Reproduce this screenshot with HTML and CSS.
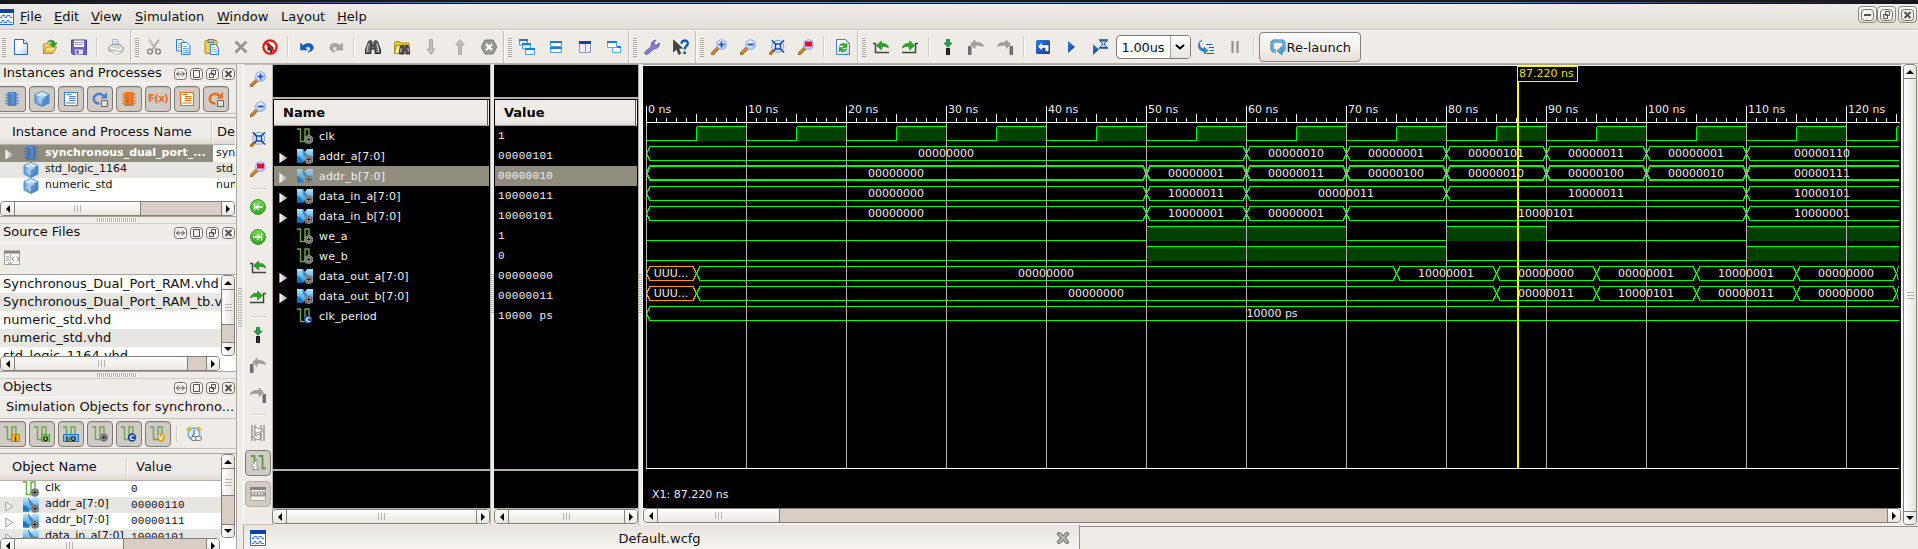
FILE: index.html
```html
<!DOCTYPE html>
<html lang="en">
<head>
<meta charset="utf-8">
<title>Default.wcfg</title>
<link rel="stylesheet" href="styles.css">
</head>
<body>
<svg class="defs" width="0" height="0" aria-hidden="true">
<defs>
<linearGradient id="gGlass" x1="0" y1="0" x2="1" y2="1"><stop offset="0" stop-color="#ffffff"/><stop offset="1" stop-color="#a5c6f2"/></linearGradient>
<linearGradient id="gPaper" x1="0" y1="0" x2="1" y2="1"><stop offset=".4" stop-color="#ffffff"/><stop offset="1" stop-color="#b4cdf5"/></linearGradient>
<linearGradient id="gFold" x1="0" y1="0" x2="0" y2="1"><stop offset="0" stop-color="#fff6a0"/><stop offset="1" stop-color="#ddb62c"/></linearGradient>
<linearGradient id="gBlue" x1="0" y1="0" x2="1" y2="1"><stop offset="0" stop-color="#2a7fe0"/><stop offset="1" stop-color="#16378c"/></linearGradient>
<linearGradient id="gBus" x1="0" y1="0" x2="0" y2="1"><stop offset="0" stop-color="#b5e6fb"/><stop offset="1" stop-color="#1f8fdc"/></linearGradient>
<linearGradient id="gGreen" x1="0" y1="0" x2="0" y2="1"><stop offset="0" stop-color="#7bdc4c"/><stop offset="1" stop-color="#2ca81f"/></linearGradient>
<linearGradient id="gTri" x1="0" y1="0" x2="1" y2="0"><stop offset="0" stop-color="#ffffff"/><stop offset="1" stop-color="#9b9b9b"/></linearGradient>
<symbol id="new" viewBox="0 0 16 16"><path d="M1.5.5h9l4 4v11h-13z" fill="url(#gPaper)" stroke="#2f62b8"/><path d="M10.500.500v4h4" fill="#dbe8fb" stroke="#2f62b8"/></symbol>
<symbol id="open" viewBox="0 0 16 16"><path d="M1.500 14.500V5.500l2-1h3l1 1.500h5v3" fill="#f3d958" stroke="#b08f1c"/><path d="M1.500 14.500l3-6.500h10l-3.500 6.500z" fill="url(#gFold)" stroke="#b08f1c"/><path d="M5.500 3C8 .3 12 .5 13 4.200l2-.3-3.200 4.300L8.300 5l2-.3C9.500 2.800 8 2.500 5.500 3z" fill="#27a81f" stroke="#127a14" stroke-width=".6"/></symbol>
<symbol id="save" viewBox="0 0 16 16"><path d="M.5 1h15v14.500H2L.5 14z" fill="#6a63c2" stroke="#4a4497"/><path d="M3 1.500h10V8H3z" fill="#fff"/><path d="M4 3.500h8M4 5.500h8" stroke="#9b96d5"/><path d="M4 10.500h8v5H4z" fill="#dcdbe6"/><path d="M5.500 11.500h2v3h-2z" fill="#4a4497"/></symbol>
<symbol id="print" viewBox="0 0 16 16"><path d="M4.500 6V.500h5l1.500 5.500" fill="#eef4fd" stroke="#9fb4d6"/><path d="M6 2.500h3M6 4.500h4" stroke="#9fb4d6" stroke-width=".8"/><path d="M.8 8l3-2.500h8l3.500 2.500v3.500l-4 3L.8 11.800z" fill="#d5d5d9" stroke="#8f8f96" stroke-width=".8"/><path d="M1 8.300l10 2.700 4-2.800" fill="none" stroke="#fff"/><path d="M2 12l7 3.500 4.500-2-3-1.500z" fill="#fff" stroke="#9a9aa0" stroke-width=".6"/></symbol>
<symbol id="cut" viewBox="0 0 16 16"><path d="M3 .500L10 10.500M13 .500L6 10.500" stroke="#a5a29d" stroke-width="1.600"/><path d="M3.500 1.500L9 9.500" stroke="#e2dfdb" stroke-width=".6"/><circle cx="4" cy="12.500" r="2.400" fill="none" stroke="#85827d" stroke-width="1.400"/><circle cx="12" cy="12.500" r="2.400" fill="none" stroke="#85827d" stroke-width="1.400"/></symbol>
<symbol id="copy" viewBox="0 0 16 16"><path d="M1.500.500h5.500l3 3v8.500H1.500z" fill="#e4f0fd" stroke="#3b83cf"/><path d="M3 4.500h4M3 6.500h3M3 8.500h3" stroke="#86b5e6"/><path d="M6.500 3.500H12l3 3v9H6.500z" fill="url(#gPaper)" stroke="#3b83cf"/><path d="M8 7.500h4M8 9.500h5.500M8 11.500h5.500M8 13.500h5.500" stroke="#6ba4e0"/></symbol>
<symbol id="paste" viewBox="0 0 16 16"><rect x="1" y="1.500" width="12" height="13" rx="1" fill="#edd04e" stroke="#a88a24"/><path d="M4 .500h6v3H4z" fill="#b9b9b9" stroke="#777"/><path d="M6.500 5.500h5l3 3v7h-8z" fill="url(#gPaper)" stroke="#3b83cf"/><path d="M8 8.500h3M8 10.500h5M8 12.500h5" stroke="#86b5e6"/></symbol>
<symbol id="del" viewBox="0 0 16 16"><path d="M2.500 2.500l11 11M13.500 2.500l-11 11" stroke="#989590" stroke-width="2.800"/></symbol>
<symbol id="noptr" viewBox="0 0 16 16"><path d="M5.500 3l7 6.500-3.200.300 1.500 3.600-2 .8-1.600-3.500L5.500 12z" fill="#333"/><circle cx="8" cy="8" r="6.600" fill="none" stroke="#ee1111" stroke-width="2.100"/><path d="M3.300 3.300l9.400 9.400" stroke="#ee1111" stroke-width="1.900"/></symbol>
<symbol id="undo" viewBox="0 0 16 16"><path d="M1.500 4v7h7L6.300 8.700c2-1.700 5-1.200 5 .8 0 1.500-.9 2.600-2.300 3.500 3.500-.3 5.800-2.400 5.300-5.200C13.300 4 8 3.300 4 6.500z" fill="#0f62c0" stroke="#0a4b9b" stroke-width=".5"/></symbol>
<symbol id="redo" viewBox="0 0 16 16"><path d="M14.500 4v7h-7L9.700 8.700c-2-1.700-5-1.200-5 .8 0 1.500.9 2.600 2.300 3.500C3.800 12.700 1.500 10.600 2 7.800 2.700 4 8 3.300 12 6.500z" fill="#aaa7a3" stroke="#88857f" stroke-width=".6"/></symbol>
<symbol id="binoc" viewBox="0 0 16 16"><path d="M3.500 2.500l2-1 1.500 1v4h2v-4l1.500-1 2 1 3 8.500v3.500h-5.500V10h-4v4.500H.500V11z" fill="#6d6d6d" stroke="#222"/><path d="M3.500 4.500L2 11v2M12 4.500l1.500 6.500v2" fill="none" stroke="#d7d7d7"/><path d="M6 4v7M10 4v7" stroke="#333"/></symbol>
<symbol id="findf" viewBox="0 0 16 16"><path d="M.500 14.500v-11l1-1h4l1 1.500H15v2" fill="#e5c43c" stroke="#b08f1c"/><path d="M.500 14.500L2.500 6.500h13v8z" fill="#f9ea83" stroke="#b08f1c"/><path d="M6.500 7l2-1 1 1v2h1.500V7l1-1 2 1 1.500 5v3h-3.500v-3h-2v3H5.500v-3z" fill="#555" stroke="#222" stroke-width=".8"/><path d="M7 9l-.5 4M14 9l.5 4" stroke="#ddd" stroke-width=".8"/></symbol>
<symbol id="down" viewBox="0 0 16 16"><path d="M6.500.500h3V10h2.500L8 15.500 4 10h2.500z" fill="#c2bfba" stroke="#9e9b96" stroke-width=".8"/></symbol>
<symbol id="up" viewBox="0 0 16 16"><path d="M6.500 15.500h3V6h2.500L8 .500 4 6h2.500z" fill="#c2bfba" stroke="#9e9b96" stroke-width=".8"/></symbol>
<symbol id="stop" viewBox="0 0 16 16"><path d="M4 1h8l4 7-4 7H4L0 8z" fill="#9b9994" stroke="#7a7773"/><path d="M5 5l6 6M11 5l-6 6" stroke="#fff" stroke-width="2.200"/></symbol>
<symbol id="cascade" viewBox="0 0 16 16"><g fill="#eaf4fd" stroke="#4aa0e4"><path d="M.500.500h8v5.500h-8zM3.500 4.500h8V10h-8zM6.500 9.500h9v6h-9z"/></g><path d="M0 1h9M3 5h9M6 10h10" stroke="#1f7bd2" stroke-width="2"/></symbol>
<symbol id="tileh" viewBox="0 0 16 16"><path d="M2.500 2.500h11v5h-11zM2.500 8.500h11v5h-11z" fill="#fff" stroke="#4aa0e4"/><path d="M2 3h12M2 9h12" stroke="#1f7bd2" stroke-width="2"/></symbol>
<symbol id="tilev" viewBox="0 0 16 16"><path d="M2.500 2.500h11v11h-11z" fill="#eef0f2" stroke="#8b9db5"/><path d="M8.500 5v8.500" stroke="#8b9db5"/><path d="M2 3.500h12" stroke="#0b449f" stroke-width="3"/></symbol>
<symbol id="layers" viewBox="0 0 16 16"><path d="M6.500 7.500h8v6h-8z" fill="#fff" stroke="#55aee8"/><path d="M1.500 2.500h9v6h-9z" fill="#fff" stroke="#55aee8"/><path d="M1 3h10M11 8h4" stroke="#1f7bd2" stroke-width="2"/></symbol>
<symbol id="wrench" viewBox="0 0 16 16"><path d="M2 15.300C.6 15 .4 13.700 1.300 12.800L7.300 7.500C6.600 4.500 8.400 1.500 12 1L10 3.600l.3 2.200 2.200.4L15.300 4c.5 3.500-2 6-5.300 5.700l-6 5.200z" fill="#8580cd" stroke="#4c4799" stroke-width=".8"/></symbol>
<symbol id="whats" viewBox="0 0 16 16"><path d="M.5 1v12l3-3 2.300 5.500 2-1L5.600 9.300h4z" fill="#444" stroke="#222" stroke-width=".6"/><path d="M8.500 4.700c0-4.200 6.300-4.200 6.300-.2 0 3-3.200 2.500-3.200 6" fill="none" stroke="#0b55bd" stroke-width="2.300"/><path d="M10.300 12.500h2.600V15h-2.600z" fill="#0b55bd"/></symbol>
<symbol id="lens" viewBox="0 0 16 16"><path d="M1.500 14.500L7 9" stroke="#9c5b13" stroke-width="3.200" stroke-linecap="round"/><path d="M1.500 14.200L6.500 9.200" stroke="#e09635" stroke-width="1.600" stroke-linecap="round"/><circle cx="10.500" cy="5.500" r="4.800" fill="url(#gGlass)" stroke="#8ea9e4" stroke-width="1.100"/></symbol>
<symbol id="zin" viewBox="0 0 16 16"><use href="#lens"/><path d="M7.500 5.500h6M10.500 2.500v6" stroke="#1b4fae" stroke-width="1.700"/></symbol>
<symbol id="zout" viewBox="0 0 16 16"><use href="#lens"/><path d="M7.500 5.500h6" stroke="#1b4fae" stroke-width="1.700"/></symbol>
<symbol id="zsel" viewBox="0 0 16 16"><use href="#lens"/><path d="M7 2.500h7v5H7z" fill="#f0022c"/></symbol>
<symbol id="zfit" viewBox="0 0 16 16"><path d="M1.500 14.500l3-3" stroke="#c2701a" stroke-width="3.200" stroke-linecap="round"/><circle cx="8.800" cy="7.300" r="6" fill="#dce8fb" stroke="#7e9bde"/><path d="M2.800 1.300L15 13.500M15 1.300L4 12.300" stroke="#164a9e" stroke-width="1.600"/><path d="M6.500 5h5v5h-5z" fill="#dce8fb" stroke="#164a9e" stroke-width="1.400"/></symbol>
<symbol id="refresh" viewBox="0 0 16 16"><path d="M1.500.500h9l4 4v11h-13z" fill="url(#gPaper)" stroke="#3b83cf"/><path d="M4.500 7.500c0-3 4-4.500 6-2.300L12 4v4.500H7.500l1.500-1.500C8 6 6 6 4.500 7.500zM11.500 9.500c0 3-4 4.500-6 2.300L4 13V8.500h4.500L7 10c1 1 3 1 4.500-.5z" fill="#2fae2b" stroke="#128016" stroke-width=".4"/></symbol>
<symbol id="garrow" viewBox="0 0 16 16"><path d="M3.500 6.500L8.500 2v2.500c4-.5 6.500 1 7 4.500-1.800-1.500-4-1.800-7-1.500V11z" fill="#27a81f" stroke="#127a14" stroke-width=".6"/></symbol>
<symbol id="prevt" viewBox="0 0 16 16"><path d="M0 4.500h2.500v9H16" fill="none" stroke="#444" stroke-width="1.500"/><use href="#garrow"/></symbol>
<symbol id="nextt" viewBox="0 0 16 16"><path d="M0 13.500h13.500v-9H16" fill="none" stroke="#444" stroke-width="1.500"/><use href="#garrow" transform="translate(16 0) scale(-1 1)"/></symbol>
<symbol id="marker" viewBox="0 0 16 16"><path d="M6.500.500h3V4h2.500L8 8.300 4 4h2.500z" fill="#28a245" stroke="#0f6b28" stroke-width=".7"/><path d="M6.500 9.500h3v6h-3z" fill="#333" stroke="#111"/></symbol>
<symbol id="pmark" viewBox="0 0 16 16"><path d="M.500 7.500h2.500v8H.500z" fill="#777" stroke="#666"/><path d="M2.500 5.500L7 1v2.500c4-.5 8 .5 8.500 4C13 6.500 10 6 7 6.500v3z" fill="#a19f9a" stroke="#85827d" stroke-width=".5"/></symbol>
<symbol id="nmark" viewBox="0 0 16 16"><path d="M13 7.500h2.500v8H13z" fill="#777" stroke="#666"/><path d="M13.500 5.500L9 1v2.500c-4-.5-8 .5-8.500 4C3 6.500 6 6 9 6.500v3z" fill="#a19f9a" stroke="#85827d" stroke-width=".5"/></symbol>
<symbol id="restart" viewBox="0 0 16 16"><rect x="1" y="1" width="14" height="14" rx="1.500" fill="url(#gBlue)"/><path d="M3 7.500L7 3.800v2.400h6.500v6H10.500V8.800H7v2.400z" fill="#fff"/></symbol>
<symbol id="run" viewBox="0 0 16 16"><path d="M5 2l7 6-7 6z" fill="url(#gBlue)"/></symbol>
<symbol id="runfor" viewBox="0 0 16 16"><path d="M1 5l6 5.500L1 16z" fill="url(#gBlue)"/><path d="M7 1h9M7 9h9" stroke="#134f9e" stroke-width="1.600"/><path d="M8 2h7l-3 3 3 3.500H8L11 5z" fill="#cfe0f8" stroke="#134f9e"/></symbol>
<symbol id="step" viewBox="0 0 16 16"><path d="M4 1C0 3 1 9 6 10V8l4 3.500L6 15v-2.500C-1.500 11.500-1 3 4 1z" fill="#2b84cc" stroke="#1660a8" stroke-width=".5"/><path d="M8 5.500h6M11 8.500h5M12 11.500h4M8 14.500h8" stroke="#1660a8" stroke-width="1.200"/></symbol>
<symbol id="pause" viewBox="0 0 16 16"><path d="M5.500 2v12M10.500 2v12" stroke="#96938e" stroke-width="2.200"/></symbol>
<symbol id="relaunch" viewBox="0 0 16 16"><path d="M6 12H3.500l-1.500-1.500V3.500L3.500 2h9L14 3.500v7L12.500 12H11" fill="none" stroke="#1f74bd" stroke-width="3"/><path d="M6 12H3.500l-1.500-1.500V3.500L3.500 2h9L14 3.500v7L12.500 12H11" fill="none" stroke="#70c0f2" stroke-width="1.400"/><path d="M7 12l5-4.500v8.500z" fill="#4da7e4" stroke="#1f74bd" stroke-width=".7"/></symbol>
<symbol id="chip" viewBox="0 0 16 16"><path d="M1 3.500h14M1 6.500h14M1 9.500h14M1 12.500h14" stroke="currentColor" stroke-width="1.300" opacity=".7"/><rect x="3.500" y="1" width="9" height="14" rx="1" fill="currentColor"/><path d="M5 2.500h4v11" stroke="#fff" opacity=".3" fill="none"/></symbol>
<symbol id="cube" viewBox="0 0 16 16"><path d="M8 .500l7 3v8.500l-7 3.500-7-3.500V3.500z" fill="#78aede" stroke="#3670ae" stroke-width=".8"/><path d="M8 .800l6.500 2.900L8 7 1.500 3.700z" fill="#d3e8fa"/><path d="M8 7v8.300l6.500-3.200V3.800z" fill="#4a87c6"/><path d="M4 6.500l4-2.500 4 2.500v4L8 13l-4-2.500z" fill="#a8d0f3" opacity=".75"/><path d="M8 8.500l4-2v4L8 13z" fill="#3670ae" opacity=".6"/></symbol>
<symbol id="doc" viewBox="0 0 16 16"><path d="M1.500 1.500h13v13h-13z" fill="#fff" stroke="currentColor" stroke-width="1.200"/><path d="M3.500 3.500h5M6 5.500h6.500M6 7.500h6.500M6 9.500h6.500M3.500 12h9" stroke="currentColor" stroke-width="1.100"/></symbol>
<symbol id="proc" viewBox="0 0 16 16"><path d="M7.500 12.500C1 12.500 0 5.500 5 3.300c2.500-1 5-.3 6.500 1.700" fill="none" stroke="currentColor" stroke-width="2.500"/><path d="M8.500 7.500H15V1z" fill="currentColor"/><path d="M9.500 9.500h6v6h-6z" fill="#e0dedb" stroke="#666"/></symbol>
<symbol id="src" viewBox="0 0 16 16"><path d="M.500 1.500h15v13h-15z" fill="#f8f7f5" stroke="#a19e99"/><path d="M0 2h16" stroke="#888580" stroke-width="3"/><path d="M6.500 4v6.500M2 6.500h3M2 8.500h3M2 10.500h3" stroke="#aaa"/><path d="M10 6.500L8 9l2 2.500M13 6.500L15 9l-2 2.500M4 13h4" stroke="#888" fill="none"/></symbol>
<symbol id="sig" viewBox="0 0 16 16"><path d="M0 1h3.500v12.500H8V1h4v7" fill="none" stroke="#6fa550" stroke-width="1.400"/></symbol>
<symbol id="knob" viewBox="0 0 16 16"><circle cx="11.800" cy="11.500" r="4" fill="#606060" stroke="#9d9d9d"/><circle cx="11.800" cy="11.500" r="2.200" fill="#c4c4c4"/><path d="M10 11.500h3.600M11.800 9.700v3.600" stroke="#111" stroke-width="1.200"/></symbol>
<symbol id="sigk" viewBox="0 0 16 16"><use href="#sig"/><use href="#knob"/></symbol>
<symbol id="bus" viewBox="0 0 16 16"><path d="M0 1h6l2 3 2-3h6v13.500H10L8 12l-2 2.500H0z" fill="url(#gBus)"/><path d="M0 8l3 1 4 5.500H0z" fill="#1676c4"/><path d="M5 1h1l5 7-1.500 2.500L6 6z" fill="#1a5f9c" opacity=".6"/><use href="#knob"/></symbol>
<symbol id="sigc" viewBox="0 0 16 16"><use href="#sig"/><circle cx="11" cy="11.500" r="4.200" fill="#24489a"/><text x="11" y="14" class="badge badge-light">C</text></symbol>
<symbol id="sigv" viewBox="0 0 16 16"><use href="#sig"/><circle cx="11" cy="11.500" r="4.200" fill="#dda02e"/><text x="11" y="14" class="badge badge-light">V</text></symbol>
<symbol id="sigi" viewBox="0 0 16 16"><use href="#sig"/><path d="M7.500 8.500h8v7h-8z" fill="#efb82c" stroke="#b58210"/><text x="11.500" y="14.600" class="badge">I</text></symbol>
<symbol id="sigo" viewBox="0 0 16 16"><use href="#sig"/><path d="M7.500 8.500h8v7h-8z" fill="#8bd06a" stroke="#4c9a30"/><text x="11.500" y="14.600" class="badge">O</text></symbol>
<symbol id="sigio" viewBox="0 0 16 16"><use href="#sig"/><path d="M.500 8.500h15v7H.500z" fill="#74bdf0" stroke="#1f6fb5"/><text x="8" y="14.600" class="badge">I/O</text></symbol>
<symbol id="alarm" viewBox="0 0 16 16"><circle cx="8" cy="8" r="5.800" fill="#e3f1fd" stroke="#6aaee6" stroke-width="1.700"/><path d="M1 4.500L4.500 1M15 4.500L11.500 1" stroke="#efb82c" stroke-width="2.600"/><path d="M8 4v4l-2 2" stroke="#345" fill="none"/><rect x="5" y="10.500" width="6" height="4" rx="2" fill="#eee" stroke="#777"/><rect x="9.500" y="10.500" width="6" height="4" rx="2" fill="#eee" stroke="#777"/></symbol>
<symbol id="first" viewBox="0 0 16 16"><circle cx="8" cy="8" r="7.400" fill="url(#gGreen)" stroke="#2a9021"/><path d="M4.500 4.500v7M12.500 8h-6M9 5L6 8l3 3" stroke="#fff" stroke-width="1.400" fill="none"/></symbol>
<symbol id="last" viewBox="0 0 16 16"><circle cx="8" cy="8" r="7.400" fill="url(#gGreen)" stroke="#2a9021"/><path d="M11.500 4.500v7M3.500 8h6M7 5l3 3-3 3" stroke="#fff" stroke-width="1.400" fill="none"/></symbol>
<symbol id="swap" viewBox="0 0 16 16"><path d="M2 0v16M5 0v16M11 0v16M14 0v16" stroke="#aaa7a3" stroke-width="1.800"/><path d="M5 2l9 3.500-9 3z" fill="#fff" stroke="#96938e"/><path d="M10 9l-9 3.500L10 15z" fill="#fff" stroke="#96938e"/></symbol>
<symbol id="snap" viewBox="0 0 16 16"><path d="M1 1h3.500v7M8.500 1h4v12.500H16" fill="none" stroke="#5d9a43" stroke-width="1.800"/><path d="M7 4v8l2 3-3-1-3 1.500 1-3L1.500 11z" fill="#f4f4f4" stroke="#777" stroke-width=".7"/></symbol>
<symbol id="ruler" viewBox="0 0 16 16"><path d="M.500 1.500h15v13h-15z" fill="#f4f3f1" stroke="#aaa7a3"/><path d="M0 2.500h16" stroke="#85827d" stroke-width="3"/><path d="M1 5.500h14v5H1z" fill="#9f9c98"/><path d="M3 6v3M6 6v3M9 6v3M12 6v3" stroke="#fff"/></symbol>
<symbol id="wavewin" viewBox="0 0 16 16"><path d="M.500.500h15v15H.500z" fill="#fff" stroke="#2a69c4"/><path d="M0 2h16" stroke="#0c439c" stroke-width="4"/><path d="M2 8.500h2v-2h3v2h2v-2h3v2h2M2 13.500h2v-2h2v2h3v-2h2v2h3" fill="none" stroke="#3f7de0"/></symbol>
<symbol id="wb-h" viewBox="0 0 13 12"><rect x=".5" y=".5" width="12" height="11" rx="3" fill="#f5f3f0" stroke="#73706b"/><path d="M2.500 6h8M5 3.500L2.500 6 5 8.500M8 3.500L10.500 6 8 8.500" fill="none" stroke="#55524e"/></symbol>
<symbol id="wb-m" viewBox="0 0 13 12"><rect x=".5" y=".5" width="12" height="11" rx="3" fill="#f5f3f0" stroke="#73706b"/><path d="M3.500 2.500h6v7h-6z" fill="none" stroke="#55524e"/></symbol>
<symbol id="wb-r" viewBox="0 0 13 12"><rect x=".5" y=".5" width="12" height="11" rx="3" fill="#f5f3f0" stroke="#73706b"/><path d="M5.500 2.500h4v4h-4zM3.500 5.500h4v4h-4z" fill="#f5f3f0" stroke="#55524e"/></symbol>
<symbol id="wb-x" viewBox="0 0 13 12"><rect x=".5" y=".5" width="12" height="11" rx="3" fill="#f5f3f0" stroke="#73706b"/><path d="M3.500 3l6 6M9.500 3l-6 6" stroke="#55524e" stroke-width="2"/></symbol>
<symbol id="wb-n" viewBox="0 0 13 12"><rect x=".5" y=".5" width="12" height="11" rx="3" fill="#f5f3f0" stroke="#73706b"/><path d="M3 6h7" stroke="#55524e" stroke-width="2"/></symbol>
<symbol id="tri" viewBox="0 0 10 12"><path d="M.500.500l9 5.500-9 5.500z" fill="url(#gTri)"/></symbol>
<symbol id="trio" viewBox="0 0 10 12"><path d="M.800 1l8 5-8 5z" fill="#f2f0ee" stroke="#999"/></symbol>
<symbol id="closex" viewBox="0 0 12 12"><path d="M2 2l8 8M10 2l-8 8" stroke="#6e6e6a" stroke-width="4" stroke-linecap="round"/><path d="M2 2l8 8M10 2l-8 8" stroke="#b9b9b5" stroke-width="2" stroke-linecap="round"/></symbol>
</defs>
</svg>

<div class="app">
  <div class="edge"></div>
  <nav class="menubar">
    <svg class="appicon" viewBox="2 0 14 16"><use href="#wavewin" width="16" height="16"/></svg>
    <span class="m-file"><u>F</u>ile</span><span class="m-edit"><u>E</u>dit</span><span class="m-view"><u>V</u>iew</span><span class="m-sim"><u>S</u>imulation</span><span class="m-win"><u>W</u>indow</span><span class="m-lay">La<u>y</u>out</span><span><u>H</u>elp</span>
    <div class="winbtns">
      <i><svg><use href="#wb-n"/></svg></i><i><svg><use href="#wb-r"/></svg></i><i class="gap"><svg><use href="#wb-x"/></svg></i>
    </div>
  </nav>
  <div class="toolbar">
    <div class="group g1"><b class="grip first"></b><svg><use href="#new"/></svg><svg><use href="#open"/></svg><svg><use href="#save"/></svg><b class="sep"></b><svg><use href="#print"/></svg></div>
    <div class="group g2"><b class="grip"></b><svg><use href="#cut"/></svg><svg><use href="#copy"/></svg><svg><use href="#paste"/></svg><svg><use href="#del"/></svg><svg><use href="#noptr"/></svg><b class="sep"></b><svg><use href="#undo"/></svg><svg><use href="#redo"/></svg><b class="sep"></b><svg><use href="#binoc"/></svg><svg><use href="#findf"/></svg><svg><use href="#down"/></svg><svg><use href="#up"/></svg><svg><use href="#stop"/></svg></div>
    <div class="group g3"><b class="grip"></b><svg><use href="#cascade"/></svg><svg><use href="#tileh"/></svg><svg><use href="#tilev"/></svg><svg><use href="#layers"/></svg></div>
    <div class="group g4"><b class="grip"></b><svg><use href="#wrench"/></svg><svg><use href="#whats"/></svg></div>
    <div class="group g5"><b class="grip"></b><svg><use href="#zin"/></svg><svg><use href="#zout"/></svg><svg><use href="#zfit"/></svg><svg><use href="#zsel"/></svg><b class="sep"></b><svg><use href="#refresh"/></svg></div>
    <div class="group g6"><b class="grip"></b><svg><use href="#prevt"/></svg><svg><use href="#nextt"/></svg><b class="sep"></b><svg><use href="#marker"/></svg><svg><use href="#pmark"/></svg><svg><use href="#nmark"/></svg><b class="sep"></b><svg><use href="#restart"/></svg><svg><use href="#run"/></svg><svg><use href="#runfor"/></svg>
      <div class="combo"><span>1.00us</span><i><svg class="chev" viewBox="0 0 10 6"><path d="M1 1l4 3.500L9 1" fill="none" stroke="#000" stroke-width="2"/></svg></i></div>
      <svg><use href="#step"/></svg><svg><use href="#pause"/></svg><b class="sep"></b>
      <div class="relaunch"><svg class="ic"><use href="#relaunch"/></svg><span>Re-launch</span></div>
    </div>
  </div>

  <div class="main">
    <aside class="left">
      <section class="dock d1">
        <div class="title"><span>Instances and Processes</span><svg><use href="#wb-h"/></svg><svg><use href="#wb-m"/></svg><svg><use href="#wb-r"/></svg><svg><use href="#wb-x"/></svg></div>
        <div class="btnrow blue"><i><svg><use href="#chip"/></svg></i><i><svg><use href="#cube"/></svg></i><i><svg><use href="#doc"/></svg></i><i><svg><use href="#proc"/></svg></i><i class="or"><svg><use href="#chip"/></svg></i><i class="or fx">F(x)</i><i class="or"><svg><use href="#doc"/></svg></i><i class="or"><svg><use href="#proc"/></svg></i></div>
        <div class="tree t1">
          <div class="thead"><span class="c1">Instance and Process Name</span><span class="c2">De</span></div>
          <div class="tbody">
            <div class="row sel"><div class="c1"><svg class="tri"><use href="#tri"/></svg><svg class="ic"><use href="#chip"/></svg><span>synchronous_dual_port_...</span></div><div class="c2">syn</div></div>
            <div class="row alt"><div class="c1"><svg class="tri"></svg><svg class="ic"><use href="#cube"/></svg><span>std_logic_1164</span></div><div class="c2">std_</div></div>
            <div class="row"><div class="c1"><svg class="tri"></svg><svg class="ic"><use href="#cube"/></svg><span>numeric_std</span></div><div class="c2">num</div></div>
          </div>
          <div class="hs"><i class="a l"></i><i class="th s-a"></i><i class="tr"></i><i class="a r"></i></div>
        </div>
      </section>
      <div class="hsplit"></div>
      <section class="dock d2">
        <div class="title"><span>Source Files</span><svg><use href="#wb-h"/></svg><svg><use href="#wb-m"/></svg><svg><use href="#wb-r"/></svg><svg><use href="#wb-x"/></svg></div>
        <div class="srcbar"><svg class="ic"><use href="#src"/></svg></div>
        <div class="tree t2">
          <div class="withv">
            <div class="files"><p>Synchronous_Dual_Port_RAM.vhd</p><p>Synchronous_Dual_Port_RAM_tb.vhd</p><p>numeric_std.vhd</p><p>numeric_std.vhd</p><p>std_logic_1164.vhd</p></div>
            <div class="vs"><i class="a u"></i><i class="th v-b"></i><i class="tr"></i><i class="a d"></i></div>
          </div>
          <div class="hs short"><i class="a l"></i><i class="th s-b"></i><i class="tr"></i><i class="a r"></i></div>
        </div>
      </section>
      <div class="hsplit"></div>
      <section class="dock d3">
        <div class="title"><span>Objects</span><svg><use href="#wb-h"/></svg><svg><use href="#wb-m"/></svg><svg><use href="#wb-r"/></svg><svg><use href="#wb-x"/></svg></div>
        <div class="caption">Simulation Objects for synchrono...</div>
        <div class="btnrow"><i><svg><use href="#sigi"/></svg></i><i><svg><use href="#sigo"/></svg></i><i><svg><use href="#sigio"/></svg></i><i><svg><use href="#sigk"/></svg></i><i><svg><use href="#sigc"/></svg></i><i><svg><use href="#sigv"/></svg></i><b class="sep"></b><svg class="ic alarm"><use href="#alarm"/></svg></div>
        <div class="tree t3">
          <div class="withv">
            <div class="objs">
              <div class="thead"><span class="c1">Object Name</span><span class="c2">Value</span></div>
              <div class="row"><div class="c1"><svg class="tri"></svg><svg class="ic"><use href="#sigk"/></svg><span>clk</span></div><code>0</code></div>
              <div class="row alt"><div class="c1"><svg class="tri"><use href="#trio"/></svg><svg class="ic"><use href="#bus"/></svg><span>addr_a[7:0]</span></div><code>00000110</code></div>
              <div class="row"><div class="c1"><svg class="tri"><use href="#trio"/></svg><svg class="ic"><use href="#bus"/></svg><span>addr_b[7:0]</span></div><code>00000111</code></div>
              <div class="row alt"><div class="c1"><svg class="tri"><use href="#trio"/></svg><svg class="ic"><use href="#bus"/></svg><span>data_in_a[7:0]</span></div><code>10000101</code></div>
            </div>
            <div class="vs"><i class="a u"></i><i class="th v-c"></i><i class="tr"></i><i class="a d"></i></div>
          </div>
          <div class="hs short"><i class="a l"></i><i class="th s-c"></i><i class="tr"></i><i class="a r"></i></div>
        </div>
      </section>
    </aside>
    <div class="vsplit"></div>

    <div class="right">
      <div class="work">
        <div class="vtool">
          <svg><use href="#zin"/></svg><svg><use href="#zout"/></svg><svg><use href="#zfit"/></svg><svg><use href="#zsel"/></svg><b></b>
          <svg><use href="#first"/></svg><svg><use href="#last"/></svg><svg><use href="#prevt"/></svg><svg><use href="#nextt"/></svg><b></b>
          <svg><use href="#marker"/></svg><svg><use href="#pmark"/></svg><svg><use href="#nmark"/></svg><b></b>
          <svg><use href="#swap"/></svg><i><svg><use href="#snap"/></svg></i><i class="soft"><svg><use href="#ruler"/></svg></i>
        </div>
        <div class="col names">
          <div class="blank"></div>
          <div class="list">
            <div class="lhead">Name</div>
            <div class="sr"><svg class="tri"></svg><svg class="ic"><use href="#sigk"/></svg><span>clk</span></div>
            <div class="sr"><svg class="tri"><use href="#tri"/></svg><svg class="ic"><use href="#bus"/></svg><span>addr_a[7:0]</span></div>
            <div class="sr sel"><svg class="tri"><use href="#tri"/></svg><svg class="ic"><use href="#bus"/></svg><span>addr_b[7:0]</span></div>
            <div class="sr"><svg class="tri"><use href="#tri"/></svg><svg class="ic"><use href="#bus"/></svg><span>data_in_a[7:0]</span></div>
            <div class="sr"><svg class="tri"><use href="#tri"/></svg><svg class="ic"><use href="#bus"/></svg><span>data_in_b[7:0]</span></div>
            <div class="sr"><svg class="tri"></svg><svg class="ic"><use href="#sigk"/></svg><span>we_a</span></div>
            <div class="sr"><svg class="tri"></svg><svg class="ic"><use href="#sigk"/></svg><span>we_b</span></div>
            <div class="sr"><svg class="tri"><use href="#tri"/></svg><svg class="ic"><use href="#bus"/></svg><span>data_out_a[7:0]</span></div>
            <div class="sr"><svg class="tri"><use href="#tri"/></svg><svg class="ic"><use href="#bus"/></svg><span>data_out_b[7:0]</span></div>
            <div class="sr"><svg class="tri"></svg><svg class="ic"><use href="#sigc"/></svg><span>clk_period</span></div>
          </div>
          <div class="foot"></div>
          <div class="hs"><i class="a l"></i><i class="th full"></i><i class="a r"></i></div>
        </div>
        <div class="colsplit"></div>
        <div class="col values">
          <div class="blank"></div>
          <div class="list">
            <div class="lhead">Value</div>
            <div class="sr"><code>1</code></div><div class="sr"><code>00000101</code></div><div class="sr sel"><code>00000010</code></div><div class="sr"><code>10000011</code></div><div class="sr"><code>10000101</code></div><div class="sr"><code>1</code></div><div class="sr"><code>0</code></div><div class="sr"><code>00000000</code></div><div class="sr"><code>00000011</code></div><div class="sr"><code>10000 ps</code></div>
          </div>
          <div class="foot"></div>
          <div class="hs"><i class="a l"></i><i class="th full"></i><i class="a r"></i></div>
        </div>
        <div class="colsplit"></div>
        <div class="wavecol">
          <svg id="wave" width="1258" height="442" viewBox="643 66 1258 442"></svg>
          <div class="hs"><i class="a l"></i><i class="th s-w"></i><i class="tr"></i><i class="a r"></i></div>
        </div>
        <div class="vs tall"><i class="a u"></i><i class="th full"></i><i class="a d"></i></div>
      </div>
      <div class="tabs">
        <div class="tab"><svg class="ic"><use href="#wavewin"/></svg><span>Default.wcfg</span><svg class="close"><use href="#closex"/></svg></div>
        <div class="tabrest"></div>
      </div>
    </div>
  </div>
</div>
<script src="wave.js"></script>
</body>
</html>
```

FILE: styles.css
```css
* { box-sizing: border-box; }
html, body { margin: 0; padding: 0; }
body { font: 13px "DejaVu Sans", sans-serif; color: #111; background: #efebe7; overflow: hidden; }
.defs { position: absolute; }
i { font-style: normal; }
svg { display: block; flex: none; }
code { font: 11px "Liberation Mono", monospace; letter-spacing: .3px; }
.badge { font: bold 6.5px "DejaVu Sans", sans-serif; text-anchor: middle; fill: #111; }
.badge-light { fill: #fff; }
.ic { width: 16px; height: 16px; }

.app { width: 1918px; height: 549px; display: flex; flex-direction: column; overflow: hidden; }
.edge { height: 4px; flex: none; background: linear-gradient(#1b1b1d 0 1px, #15171c 1px 2px, transparent 2px 3px, #10141c 3px), linear-gradient(90deg, #15161a 0, #5f80b8 480px, #6d8fc8 960px, #5f80b8 1500px, #15161a 1900px); }

.menubar { height: 27px; flex: none; display: flex; align-items: center; padding-bottom: 1px; background: linear-gradient(#efebe7, #e2dfd9); border-bottom: 1px solid #fff; box-shadow: inset 0 -1px #c9c5bf; }
.menubar span { line-height: 22px; padding-top: 1px; }
.menubar u { text-underline-offset: 2px; text-decoration-thickness: 1px; }
.appicon { width: 14px; height: 16px; margin-right: 6px; }
.m-file { width: 34px; } .m-edit { width: 37px; } .m-view { width: 44px; } .m-sim { width: 82px; } .m-win { width: 64px; } .m-lay { width: 56px; }
.winbtns { margin-left: auto; display: flex; padding-right: 1px; margin-top: -4px; }
.winbtns i { width: 19px; height: 17px; border: 1px solid #8a8680; border-radius: 4px; background: linear-gradient(#fff, #e6e2dd); display: flex; align-items: center; justify-content: center; }
.winbtns .gap { margin-left: 2px; }
.winbtns svg { width: 13px; height: 12px; }

.toolbar { height: 33px; flex: none; display: flex; border-bottom: 1px solid #b5b0aa; }
.group { display: flex; align-items: center; border-right: 1px solid #c4c0ba; box-shadow: 1px 0 #fff; flex: none; }
.group > svg { width: 16px; height: 16px; margin: 0 6.5px; }
.g1 { width: 131px; } .g2 { width: 373px; } .g3 { width: 125px; } .g4 { width: 67px; } .g5 { width: 162px; } .g6 { width: 1060px; border: 0; box-shadow: none; }
.grip { width: 4px; height: 19px; margin: 0 .5px 0 4px; background: repeating-linear-gradient(#a9a59f 0 1px, #fbfaf8 1px 2px); }
.grip.first { margin-left: 2px; }
.group .sep { width: 2px; height: 20px; margin: 0 3px; background: linear-gradient(90deg, #d2cec9 50%, #fff 50%); }
.g6 .sep + svg { margin-left: 7px; margin-right: 6px; }
.combo { width: 75px; height: 24px; margin: 0 1px 0 1px; border: 1px solid #7f7b76; border-radius: 4px; background: #fff; display: flex; align-items: center; }
.combo span { width: 53px; padding-left: 5px; letter-spacing: -.2px; }
.combo i { flex: 1; height: 22px; border-left: 1px solid #aaa59f; background: linear-gradient(#fefefd, #e8e4df); border-radius: 0 3px 3px 0; display: flex; align-items: center; justify-content: center; }
.chev { width: 10px; height: 6px; }
.relaunch { width: 102px; height: 30px; border: 1px solid #86817b; border-radius: 4px; background: linear-gradient(#fcfbfa, #f1eeea 60%, #e6ddd7); display: flex; align-items: center; padding-left: 10px; gap: 1px; margin-left: 1px; }

.main { flex: 1; display: flex; min-height: 0; }
.left { width: 237px; flex: none; display: flex; flex-direction: column; border-right: 1px solid #aca7a0; overflow: hidden; }
.title { height: 20px; display: flex; align-items: center; gap: 3px; padding: 0 1px 1px 3px; border-top: 1px solid #cfcbc5; border-bottom: 1px solid #fff; }
.title span { flex: 1; line-height: 16px; white-space: nowrap; padding-bottom: 1px; }
.title svg { width: 13px; height: 12px; }
.btnrow { height: 30px; display: flex; align-items: center; gap: 3px; border-bottom: 1px solid #c4c0ba; color: #4d7fc4; }
.btnrow i { width: 26px; height: 26px; flex: none; border: 1px solid #7f7b76; border-radius: 4px; background: #d1cbc6; box-shadow: inset 0 1px #bdb7b1; display: flex; align-items: center; justify-content: center; }
.btnrow i:first-child { border-left: 0; border-radius: 0 4px 4px 0; padding-right: 1px; }
.btnrow svg { width: 16px; height: 16px; }
.btnrow .or { color: #e2701d; }
.btnrow .fx { font-size: 10px; font-weight: bold; letter-spacing: -.6px; }
.btnrow .sep { width: 2px; height: 16px; margin-left: 2px; background: linear-gradient(90deg, #d2cec9 50%, #fff 50%); }
.alarm { margin-left: 5px; }
.tree { border-top: 1px solid #a6a29b; background: #fff; font-size: 11px; overflow: hidden; }
.thead { height: 27px; background: linear-gradient(#efebe7, #efebe7 70%, #dfdad4); border-bottom: 1px solid #b5b0a9; display: flex; align-items: center; font-size: 13px; line-height: 20px; white-space: nowrap; overflow: hidden; }
.thead .c1 { padding-left: 12px; border-right: 1px solid #fff; box-shadow: inset -1px 0 #d0ccc6; }
.thead .c2 { padding-left: 4px; }
.t1 .thead span { padding-top: 2px; }
.row { height: 16px; display: flex; line-height: 14px; white-space: nowrap; overflow: hidden; }
.row.alt { background: #e8e6e2; }
.row .c1 { display: flex; align-items: flex-start; flex: none; overflow: hidden; }
.row .tri { width: 9px; height: 11px; margin: 4px 9px 0 5px; }
.row .c1 span { margin-left: 6px; }
.row .c2 { padding-left: 3px; overflow: hidden; flex: 1; }
.row.sel .c1 { background: #918d7e; color: #fff; font-weight: bold; }
.row.sel .c1 .ic { color: #4778ac; }
.row.sel .c2 { background: #fff; }
.row.sel { line-height: 16px; }
.d1 { height: 153px; }
.t1 { margin: 3px 0 0; height: 100px; border-bottom: 1px solid #a6a29b; padding-right: 1px; }
.t1 .c1 { width: 213px; }
.t1 .tbody { height: 56px; }
.t1 .row.sel { height: 17px; }
.hsplit { height: 6px; background: repeating-linear-gradient(90deg, #b5b1ab 0 1px, #fbfaf8 1px 2px) 97px 1px / 40px 4px no-repeat; }
.d2 { height: 149px; }
.srcbar { height: 31px; padding: 7px 0 0 4px; }
.t2 { height: 98px; border-bottom: 1px solid #a6a29b; }
.withv { display: flex; }
.t2 .withv { height: 81px; }
.files { width: 221px; overflow: hidden; font-size: 13px; }
.files p { margin: 0; height: 18px; line-height: 18px; padding-left: 3px; white-space: nowrap; }
.files p:nth-child(even) { background: #e8e6e2; }
.d3 { height: 171px; }
.caption { height: 21px; line-height: 18px; padding-left: 6px; white-space: nowrap; border-bottom: 1px solid #c4c0ba; }
.t3 { margin-top: 4px; }
.t3 .withv { height: 84px; }
.objs { width: 221px; overflow: hidden; }
.objs .c1 { width: 128px; }
.objs .thead .c2 { padding-left: 8px; }
.objs code { padding-left: 3px; letter-spacing: .1px; line-height: 16px; }

.hs { height: 15px; display: flex; background: #d8cec6; border: 1px solid #837f79; border-radius: 4px; overflow: hidden; }
.hs.short { width: 220px; }
.t1 .hs { width: 235px; }
.vs { width: 14px; display: flex; flex-direction: column; background: #d8cec6; border: 1px solid #837f79; border-radius: 4px; overflow: hidden; flex: none; }
.a, .th { flex: none; background: linear-gradient(#fff, #f4f1ee 50%, #e9e5e0); display: flex; align-items: center; justify-content: center; }
.vs .a, .vs .th { background: linear-gradient(90deg, #fff, #f4f1ee 50%, #e6e2dc); }
.hs .a { width: 13px; } .vs .a { height: 13px; }
.a::after { content: ""; border: 4px solid transparent; }
.a.l::after { border-width: 4px 4px 4px 0; border-right-color: #000; }
.a.r::after { border-width: 4px 0 4px 4px; border-left-color: #000; }
.a.u::after { border-width: 0 4px 4px; border-bottom-color: #000; }
.a.d::after { border-width: 4px 4px 0; border-top-color: #000; }
.a.r { border-left: 1px solid #837f79; }
.a.d { border-top: 1px solid #837f79; }
.hs .th { border: solid #837f79; border-width: 0 1px; }
.vs .th { border: solid #837f79; border-width: 1px 0; }
.hs .th.full, .vs .th.full { flex: 1; border-right: 0; border-bottom: 0; }
.hs .th::after { content: ""; width: 7px; height: 7px; background: linear-gradient(90deg, #b9b4ae 1px, transparent 1px 3px, #b9b4ae 3px 4px, transparent 4px 6px, #b9b4ae 6px); }
.vs .th::after { content: ""; width: 7px; height: 7px; background: linear-gradient(#b9b4ae 1px, transparent 1px 3px, #b9b4ae 3px 4px, transparent 4px 6px, #b9b4ae 6px); }
.tr { flex: 1; }
.s-a { width: 127px; } .s-b { width: 174px; } .s-c { width: 110px; } .s-w { width: 123px; }
.v-b { height: 36px; } .v-c { height: 28px; }

.vsplit { width: 6px; flex: none; background: repeating-linear-gradient(#b5b1ab 0 1px, #fbfaf8 1px 2px) 1px 224px / 4px 40px no-repeat; }
.right { flex: 1; display: flex; flex-direction: column; min-width: 0; }
.work { height: 461px; display: flex; }
.vtool { width: 29px; flex: none; border-left: 1px solid #fff; border-top: 1px solid #c4c0ba; border-bottom: 1px solid #c4c0ba; display: flex; flex-direction: column; align-items: center; padding-top: 5px; }
.vtool > svg { width: 16px; height: 16px; margin: 0 0 14px; }
.vtool b { width: 15px; height: 2px; margin: -3px 0 9px; background: linear-gradient(#d2cec9 50%, #fff 50%); }
.vtool > svg:first-child { margin-top: 1px; }
.vtool i { width: 26px; height: 26px; flex: none; border: 1px solid #7f7b76; border-radius: 4px; background: #d1cbc6; display: flex; align-items: center; justify-content: center; margin: -5px 0 10px; }
.vtool i svg { width: 16px; height: 16px; }
.vtool .soft { border-color: #b5b0a9; }

.col { flex: none; display: flex; flex-direction: column; border-top: 1px solid #a6a29b; }
.names { width: 218px; border-left: 1px solid #b5b1a8; }
.values { width: 144px; }
.blank { height: 32px; background: #000; border-bottom: 0; }
.list { height: 372px; background: #000; border-top: 2px solid #b5b1a8; padding: 1px 1px 0; }
.lhead { height: 26px; line-height: 25px; padding-left: 9px; background: linear-gradient(#efebe7 80%, #e0dad5); border-bottom: 1px solid #a39e96; box-shadow: inset -1px 0 #efebe7, inset -2px 0 #555; font-weight: bold; color: #000; }
.sr { height: 20px; display: flex; align-items: center; color: #f0f0f0; font-size: 11px; line-height: 18px; letter-spacing: .2px; }
.sr.sel { background: #918d7e; }
.sr.sel .ic { opacity: .75; }
.sr .tri { width: 9px; height: 12px; margin: 3px 9px 0 5px; }
.sr .ic { margin-top: 0; }
.sr span { margin-left: 6px; padding-top: 2px; line-height: 16px; }
.sr code { padding-left: 3px; padding-bottom: 0; }
.foot { height: 40px; background: #000; border: solid #b5b1a8; border-width: 2px 0 1px; }
.col .hs { margin-top: 0; margin-left: -1px; margin-right: 0; }
.values .hs { margin-left: 0; }
.colsplit { width: 4px; flex: none; border-left: 1px solid #b5b1a8; background: repeating-linear-gradient(#b5b1ab 0 1px, #fbfaf8 1px 2px) 0 210px / 3px 39px no-repeat; }
.wavecol { width: 1260px; flex: none; border-left: 1px solid #fff; border-top: 1px solid #a6a29b; padding-top: 1px; background: #f4f2ef; border-right: 1px solid #fff; }
#wave { background: #000; shape-rendering: crispEdges; }
#wave text { font: 11px "DejaVu Sans", sans-serif; fill: #ececec; }
#wave .val { letter-spacing: 0; text-anchor: middle; }
#wave .cur { fill: #e6e600; }
.wavecol .hs { width: 1258px; }
.vs.tall { height: 461px; margin-left: 1px; }

.tabs { flex: 1; display: flex; }
.tab { width: 837px; display: flex; align-items: center; padding: 2px 10px 0 6px; background: linear-gradient(#e8e3dd, #f7f4f1); border-left: 1px solid #a6a29b; border-right: 1px solid #96928b; }
.tab span { flex: 1; text-align: center; line-height: 18px; padding: 1px 4px 0 0; }
.tab .close { width: 12px; height: 12px; }
.tabrest { flex: 1; border-top: 1px solid #918d86; margin-top: 1px; }
```

FILE: wave.js
```javascript
const X0 = 646, PX = 10, END = 125.3, ROW0 = 126, PITCH = 20, H = 14;
const x = t => X0 + t * PX;
const out = [];
const line = (x1, y1, x2, y2, c, w = 1) =>
  out.push(`<path d="M${x1} ${y1}L${x2} ${y2}" stroke="${c}" stroke-width="${w}" fill="none"/>`);
const GREEN = '#00ff00', ORANGE = '#ff9c00';

// Each entry: [start time, value]; a bus value lasts until the next entry.
const signals = [
  { level: [[0, 0], ...Array.from({ length: 25 }, (_, i) => [5 + i * 5, (i + 1) % 2])] },
  { bus: [[0, '00000000'], [60, '00000010'], [70, '00000001'], [80, '00000101'], [90, '00000011'], [100, '00000001'], [110, '00000110']] },
  { thick: true, bus: [[0, '00000000'], [50, '00000001'], [60, '00000011'], [70, '00000100'], [80, '00000010'], [90, '00000100'], [100, '00000010'], [110, '00000111']] },
  { bus: [[0, '00000000'], [50, '10000011'], [60, '00000011'], [80, '10000011'], [110, '10000101']] },
  { bus: [[0, '00000000'], [50, '10000001'], [60, '00000001'], [70, '10000101'], [110, '10000001']] },
  { level: [[0, 0], [50, 1], [70, 0], [80, 1], [90, 0], [110, 1]] },
  { level: [[0, 0], [50, 1], [80, 0], [110, 1]] },
  { bus: [[0, 'UUU...'], [5, '00000000'], [75, '10000001'], [85, '00000000'], [95, '00000001'], [105, '10000001'], [115, '00000000'], [125, '']] },
  { bus: [[0, 'UUU...'], [5, '00000000'], [85, '00000011'], [95, '10000101'], [105, '00000011'], [115, '00000000'], [125, '']] },
  { bus: [[0, '10000 ps']] }
];

signals.forEach((s, r) => {
  const hi = ROW0 + r * PITCH + 0.5, lo = hi + H, mid = hi + H / 2;
  const segs = s.level || s.bus;
  segs.forEach(([t, v], i) => {
    const last = i === segs.length - 1;
    const a = x(t) + 0.5, b = last ? x(END) - 0.5 : x(segs[i + 1][0]) + 0.5;
    if (s.level) {
      if (v) {
        out.push(`<rect x="${a}" y="${hi}" width="${b - a}" height="${H + 0.5}" fill="#004000"/>`);
        line(a, lo + 0.5, a, hi, GREEN);
      }
      line(a, v ? hi : lo, b, v ? hi : lo, GREEN);
    } else {
      const c = v[0] === 'U' ? ORANGE : GREEN, w = s.thick ? 2 : 1, o = s.thick ? 0.5 : 0;
      const k = Math.min(3.5, b - a);
      const right = last ? '' : 1;
      [hi, lo].forEach(y => {
        const yy = y - o;
        out.push(`<path d="M${a} ${mid}L${a + k} ${yy}H${right ? b - k : b}${right ? `L${b} ${mid}` : ''}" stroke="${c}" stroke-width="${w}" fill="none"/>`);
      });
      if (v) out.push(`<text class="val" x="${(a + b) / 2 - 0.5}" y="${mid + 3.500}">${v}</text>`);
    }
  });
});

for (let t = 0; t <= 125; t++) {
  const px = x(t) + 0.5;
  if (t % 10 === 0) {
    line(px, 123, px, 468, '#b4b4b4');
    line(px, 106, px, 122, '#ffffff');
    out.push(`<text x="${px + 1.5}" y="113">${t} ns</text>`);
  } else line(px, t % 5 ? 118 : 114, px, 122, '#ffffff');
}
line(X0, 122.5, 1900, 122.5, '#ffffff');
line(X0, 468.5, 1899, 468.5, '#ffffff');
out.push('<text x="652" y="498">X1: 87.220 ns</text>');

const cx = x(87.22);
line(Math.round(cx), 82, Math.round(cx), 468, '#ffff00', 2);
out.push('<rect x="1517.5" y="66.5" width="60" height="15" fill="#000" stroke="#ffff00"/>');
out.push('<text class="cur" x="1519" y="77">87.220 ns</text>');
document.getElementById('wave').innerHTML = out.join('');
```
